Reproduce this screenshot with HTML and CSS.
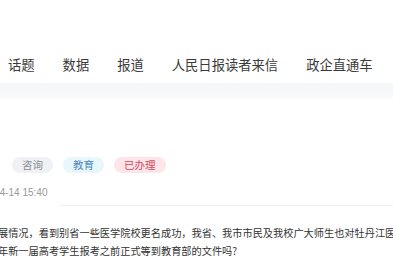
FILE: index.html
```html
<!DOCTYPE html>
<html lang="zh-CN">
<head>
<meta charset="utf-8">
<link rel="stylesheet" href="styles.css">
</head>
<body>
<div class="page">
  <nav class="nav">
    <a class="nav-item">话题</a>
    <a class="nav-item">数据</a>
    <a class="nav-item">报道</a>
    <a class="nav-item">人民日报读者来信</a>
    <a class="nav-item">政企直通车</a>
  </nav>
  <div class="band"></div>
  <main class="content">
    <div class="tags">
      <span class="tag tag-gray">咨询</span>
      <span class="tag tag-blue">教育</span>
      <span class="tag tag-red">已办理</span>
    </div>
    <div class="date">2023-04-14 15:40</div>
    <div class="divider"></div>
    <p class="body-text">展情况，看到别省一些医学院校更名成功，我省、我市市民及我校广大师生也对牡丹江医<br>年新一届高考学生报考之前正式等到教育部的文件吗?</p>
  </main>
</div>
</body>
</html>
```

FILE: styles.css
```css
html, body {
  margin: 0;
  padding: 0;
  background: #ffffff;
}

.page {
  width: 393px;
  height: 267px;
  overflow: hidden;
  font-family: "Noto Sans CJK SC", "Noto Sans", sans-serif;
  color: #333333;
}

.nav {
  display: flex;
  gap: 28px;
  padding: 56px 0 9px 8px;
  height: 18px;
}

.nav-item {
  font-size: 13.3px;
  line-height: 18px;
  color: #3a3a3a;
  white-space: nowrap;
}

.band {
  height: 17px;
  background: linear-gradient(#f5f6f7, #f8f9fa 70%, #fcfcfc);
}

.content {
  padding-top: 57px;
}

.tags {
  display: flex;
  gap: 10px;
  padding-left: 12px;
}

.tag {
  height: 16px;
  line-height: 16px;
  padding: 0 10px;
  border-radius: 8px;
  font-size: 10.5px;
  white-space: nowrap;
}

.tag-gray {
  background: #eff1f4;
  color: #868c95;
}

.tag-blue {
  background: #e8f7fb;
  color: #4f88c4;
}

.tag-red {
  background: #fde5e9;
  color: #d6475a;
}

.date {
  margin-top: 13px;
  margin-left: -31.5px;
  font-family: "Liberation Sans", Arial, sans-serif;
  font-size: 10px;
  line-height: 14px;
  color: #999999;
  white-space: nowrap;
}

.divider {
  margin-top: 5px;
  margin-left: 60px;
  border-top: 1px solid #f1f1f1;
}

.body-text {
  margin: 18px 0 0 -2px;
  font-size: 10.2px;
  line-height: 18px;
  color: #333333;
  white-space: nowrap;
}
```
